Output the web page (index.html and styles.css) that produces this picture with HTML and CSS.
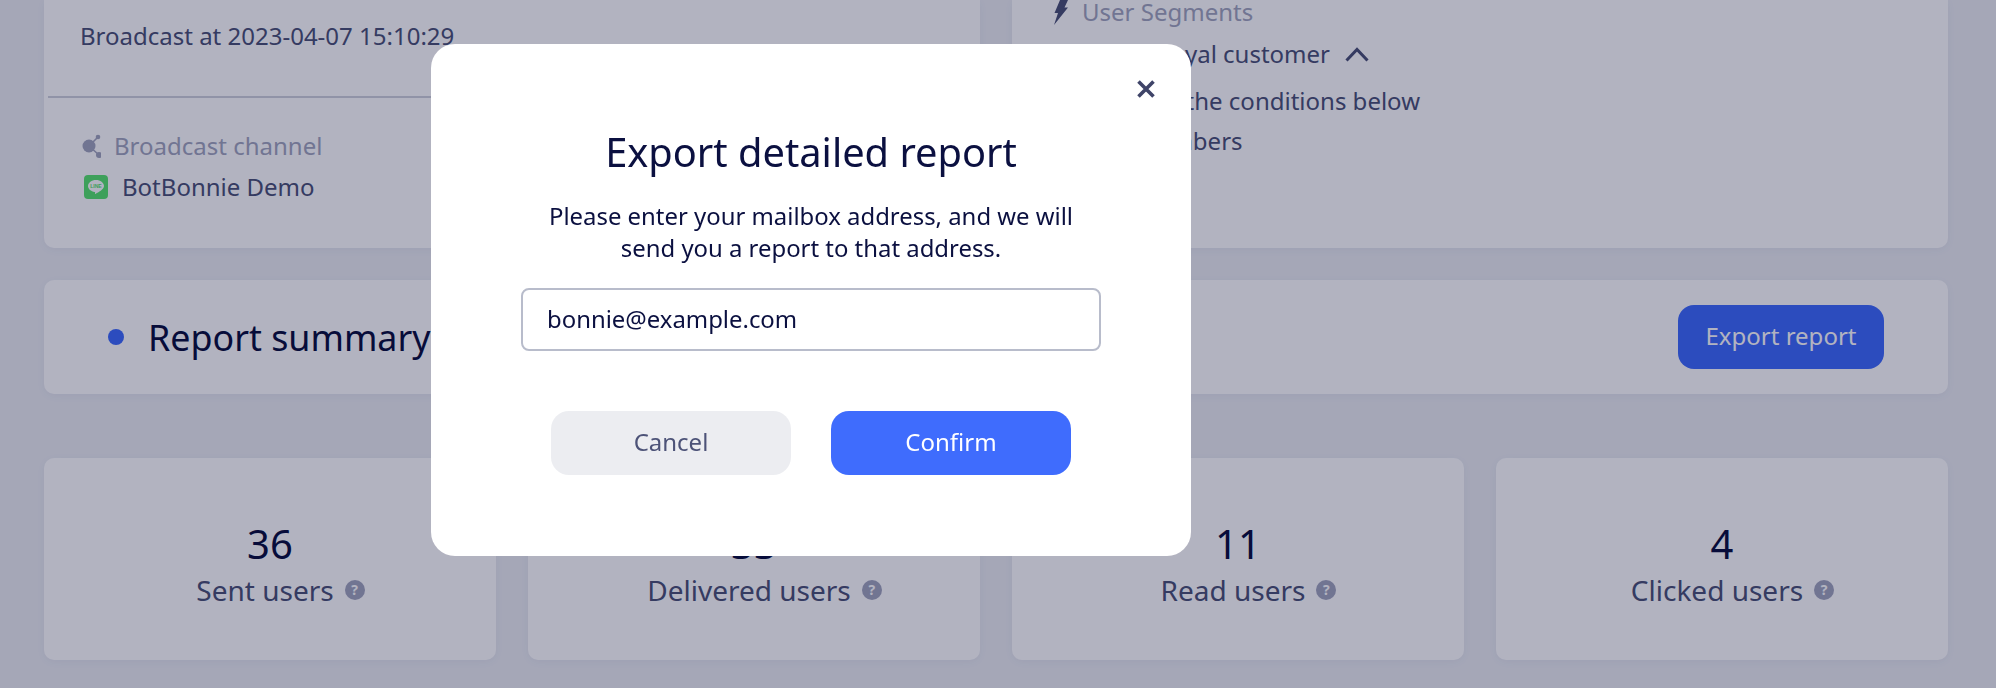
FILE: index.html
```html
<!DOCTYPE html>
<html lang="en">
<head>
  <meta charset="UTF-8" />
  <meta name="viewport" content="width=device-width, initial-scale=1.0"/>
  <title>Broadcast report</title>
  <link rel="stylesheet" href="styles.css">
</head>
<body>
  <div class="page">
    <div class="top-row">
      <div class="card info-card">
        <div class="broadcast-time">Broadcast at 2023-04-07 15:10:29</div>
        <div class="divider"></div>
        <div class="label-row channel-label">
          <svg class="channel-icon" width="20" height="24" viewBox="0 0 20 24">
            <circle cx="8" cy="12" r="6.5" fill="currentColor"/>
            <line x1="8" y1="12" x2="17" y2="3" stroke="currentColor" stroke-width="1.6"/>
            <line x1="8" y1="12" x2="18" y2="21" stroke="currentColor" stroke-width="1.6"/>
            <circle cx="17" cy="3" r="2.3" fill="currentColor"/>
            <circle cx="18" cy="21" r="3" fill="currentColor"/>
          </svg>
          <span>Broadcast channel</span>
        </div>
        <div class="channel-row">
          <svg width="24" height="24" viewBox="0 0 24 24">
            <rect width="24" height="24" rx="4" fill="#5ae46f"/>
            <path d="M12 5c-4.400 0-8 2.700-8 6.100 0 3 2.900 5.400 6.700 5.900.6.100.4.900.3 1.500-.1.500.3.600.8.300 2.300-1.400 8.200-4.200 8.200-7.700C20 7.700 16.400 5 12 5z" fill="#fff"/>
            <text x="12" y="12.800" class="line-text">LINE</text>
          </svg>
          <span>BotBonnie Demo</span>
        </div>
      </div>
      <div class="card info-card segment-card">
        <div class="label-row segment-label">
          <svg width="16" height="25" viewBox="0 0 16 25">
            <path class="bolt" d="M7 0h8l-3.500 7.500H15L1 25l4-12H1.500z"/>
          </svg>
          <span>User Segments</span>
        </div>
        <div class="segment-name">
          <span>Tag: Loyal customer</span>
          <svg width="24" height="15" viewBox="0 0 24 15">
            <path d="M1.500 13.500L12 2.500l10.500 11" fill="none" stroke="currentColor" stroke-width="3"/>
          </svg>
        </div>
        <div class="segment-rule">Match all the conditions below</div>
        <div class="segment-count">128 members</div>
      </div>
    </div>

    <div class="card summary-bar">
      <div class="summary-title">
        <span class="dot"></span>
        <span>Report summary</span>
      </div>
      <button class="primary-btn export-btn">Export report</button>
    </div>

    <div class="stats">
      <div class="card stat-card">
        <div class="stat-num">36</div>
        <div class="stat-label">Sent users <span class="help">?</span></div>
      </div>
      <div class="card stat-card">
        <div class="stat-num">33</div>
        <div class="stat-label">Delivered users <span class="help">?</span></div>
      </div>
      <div class="card stat-card">
        <div class="stat-num">11</div>
        <div class="stat-label">Read users <span class="help">?</span></div>
      </div>
      <div class="card stat-card">
        <div class="stat-num">4</div>
        <div class="stat-label">Clicked users <span class="help">?</span></div>
      </div>
    </div>
  </div>

  <div class="overlay">
    <div class="modal">
      <svg class="close-icon" width="18" height="18" viewBox="0 0 18 18">
        <path d="M1.500 1.500l15 15M16.500 1.500l-15 15" stroke="currentColor" stroke-width="3.600" fill="none"/>
      </svg>
      <h2>Export detailed report</h2>
      <p>Please enter your mailbox address, and we will<br>send you a report to that address.</p>
      <input type="text" class="mail-input" value="bonnie@example.com" />
      <div class="modal-actions">
        <button class="cancel-btn">Cancel</button>
        <button class="primary-btn confirm-btn">Confirm</button>
      </div>
    </div>
  </div>
</body>
</html>
```

FILE: styles.css
```css
html, body {
  margin: 0;
  height: 688px;
  overflow: hidden;
}

body {
  font-family: "Noto Sans", "Open Sans", sans-serif;
  font-size: 24px;
  line-height: 32px;
  color: #4d5378;
  background: #eceef3;
}

.page {
  padding: 0 48px 0 44px;
}

.card {
  background: #fff;
  border-radius: 10px;
  box-shadow: 0 2px 10px rgba(20, 30, 90, 0.04);
}

.top-row {
  display: grid;
  grid-template-columns: 1fr 1fr;
  gap: 32px;
  height: 248px;
}

.info-card {
  border-top-left-radius: 0;
  border-top-right-radius: 0;
  height: 248px;
  box-sizing: border-box;
}

.broadcast-time {
  padding: 20px 0 0 36px;
  height: 76px;
}

.divider {
  height: 2px;
  margin: 0 4px;
  background: #cfd1dc;
}

.label-row {
  display: flex;
  align-items: center;
  color: #a3a6be;
}

.channel-label {
  margin: 32px 0 0 37px;
  height: 32px;
  gap: 13px;
}

.channel-icon {
  color: #a3a6be;
}

.channel-row {
  display: flex;
  align-items: center;
  gap: 14px;
  margin: 9px 0 0 40px;
}

.line-text {
  font-family: "Liberation Sans", sans-serif;
  font-size: 5px;
  font-weight: 700;
  text-anchor: middle;
  fill: #5ae46f;
}

.segment-card {
  padding-left: 41px;
}

.segment-label {
  gap: 13px;
  height: 24px;
  line-height: 24px;
}

.bolt {
  fill: #4d5378;
}

.segment-name {
  display: flex;
  align-items: center;
  gap: 15px;
  margin: 14px 0 0 53px;
}

.segment-rule {
  margin: 15px 0 0 24px;
}

.segment-count {
  margin: 8px 0 0 34px;
}

.summary-bar {
  display: flex;
  align-items: center;
  justify-content: space-between;
  height: 114px;
  margin-top: 32px;
  padding: 0 64px;
}

.summary-title {
  display: flex;
  align-items: center;
  gap: 24px;
  font-size: 35.8px;
  line-height: 48px;
  color: #0b1040;
}

.dot {
  width: 16px;
  height: 16px;
  border-radius: 50%;
  background: #3f6cfd;
}

button {
  font-family: inherit;
  font-size: 24px;
  padding: 0 0 3px;
  border: none;
  cursor: pointer;
}

.primary-btn {
  background: #3f6cfd;
  color: #fff;
}

.export-btn {
  width: 206px;
  height: 64px;
  margin-top: -1px;
  border-radius: 16px;
}

.stats {
  display: grid;
  grid-template-columns: repeat(4, 1fr);
  gap: 32px;
  margin-top: 64px;
}

.stat-card {
  height: 202px;
  padding-top: 61px;
  box-sizing: border-box;
  text-align: center;
}

.stat-num {
  font-size: 40px;
  line-height: 50px;
  color: #0b1040;
}

.stat-label {
  display: flex;
  align-items: center;
  justify-content: center;
  gap: 11px;
  margin-top: 5px;
  padding-left: 21px;
  font-size: 28px;
}

.help {
  display: flex;
  align-items: center;
  justify-content: center;
  width: 20px;
  height: 20px;
  border-radius: 50%;
  background: #a3a6be;
  color: #fff;
  font-size: 14px;
  font-weight: 700;
  line-height: 20px;
}

.overlay {
  position: fixed;
  top: 0;
  left: 0;
  right: 0;
  bottom: 0;
  background: rgba(0, 2, 45, 0.3);
}

.modal {
  position: absolute;
  top: 44px;
  left: 431px;
  width: 760px;
  height: 512px;
  border-radius: 24px;
  background: #fff;
  text-align: center;
  font-size: 23.9px;
  color: #0b1040;
}

.close-icon {
  position: absolute;
  top: 36px;
  right: 36px;
  color: #3f4468;
}

.modal h2 {
  margin: 80px 0 0;
  font-size: 39.8px;
  line-height: 56px;
  font-weight: 400;
}

.modal p {
  margin: 20px 0 0;
}

.mail-input {
  display: block;
  box-sizing: border-box;
  width: 580px;
  height: 63px;
  margin: 24px auto 0;
  padding: 0 24px 2px;
  border: 2px solid #b8bccb;
  border-radius: 8px;
  font-family: inherit;
  font-size: 23.9px;
  color: #0b1040;
}

.modal-actions {
  display: flex;
  justify-content: center;
  gap: 40px;
  margin-top: 60px;
}

.modal-actions button {
  width: 240px;
  height: 64px;
  border-radius: 18px;
}

.cancel-btn {
  background: #ecedf1;
  color: #4d5378;
}
```
